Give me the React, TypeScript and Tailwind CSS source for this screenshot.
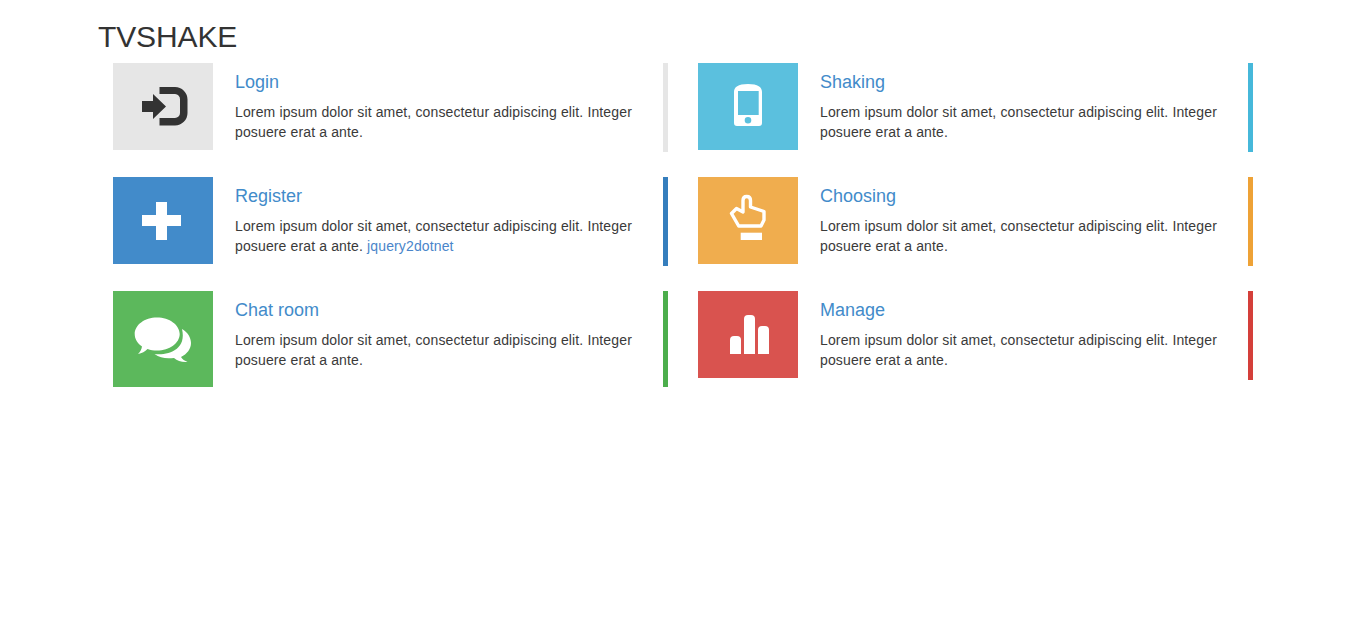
import React from "react";

const body = "Lorem ipsum dolor sit amet, consectetur adipiscing elit. Integer posuere erat a ante.";

function Item({
  title,
  bg,
  bar,
  h,
  box,
  link,
  children,
}: {
  title: string;
  bg: string;
  bar: string;
  h: string;
  box: string;
  link?: boolean;
  children: React.ReactNode;
}) {
  return (
    <div className={`flex items-start border-r-[5px] ${bar} ${h}`}>
      <div className={`w-[100px] shrink-0 ${bg} ${box}`}>
        {children}
      </div>
      <div className="ml-[22px] flex-1 pt-[9px]">
        <h4 className="text-[18px] leading-[20px] text-[#428bca] font-normal mb-[10px]">{title}</h4>
        <p className="text-[14px] leading-[20px] text-[#3a3a3a] tracking-[0.135px]">
          {body}
          {link && (
            <>
              {" "}
              <a className="text-[#4a85ca]">jquery2dotnet</a>
            </>
          )}
        </p>
      </div>
    </div>
  );
}

export default function App() {
  return (
    <div className="bg-white min-h-[626px] font-['Liberation_Sans',Arial,sans-serif] text-[#333333]">
      <h1 className="pl-[98px] pt-[20px] pb-[10px] text-[30px] leading-[33px] font-normal tracking-[-0.12px]">TVSHAKE</h1>
      <div className="ml-[113px] w-[1140px] grid grid-cols-2 gap-x-[30px] gap-y-[25px] items-start">
        <Item title="Login" bg="bg-[#e6e6e6]" bar="border-[#e6e6e6]" h="h-[89px]" box="h-[87px]">
          <svg viewBox="113 63 100 87" className="block w-[100px] h-[87px]" fill="#333333">
            <path d="M142 101H153V94L166 106.5L153 119V112H142Z" />
            <path d="M159.5 87H175A12.5 12.5 0 0 1 187.5 99.5V113A12.5 12.5 0 0 1 175 125.5H159.5V118H175A5 5 0 0 0 180 113V99.5A5 5 0 0 0 175 94H159.5Z" />
          </svg>
        </Item>
        <Item title="Shaking" bg="bg-[#5bc0de]" bar="border-[#46b8da]" h="h-[89px]" box="h-[87px]">
          <svg viewBox="698 63 100 87" className="block w-[100px] h-[87px]" fill="#ffffff">
            <path
              fillRule="evenodd"
              d="M734 92C734 87 738 84 748 84C758 84 762 87 762 92V123Q762 126 759 126H737Q734 126 734 123ZM738 91V115H758.7V91ZM748 117A3.3 3.3 0 1 0 748 123.6A3.3 3.3 0 1 0 748 117Z"
            />
          </svg>
        </Item>
        <Item title="Register" bg="bg-[#428bca]" bar="border-[#357ebd]" h="h-[89px]" box="h-[87px]" link>
          <svg viewBox="113 177 100 87" className="block w-[100px] h-[87px]" fill="#ffffff">
            <path d="M156 202H167V215H181V226H167V240H156V226H142V215H156Z" />
          </svg>
        </Item>
        <Item title="Choosing" bg="bg-[#f0ad4e]" bar="border-[#eea236]" h="h-[89px]" box="h-[87px]">
          <svg viewBox="698 177 100 87" className="block w-[100px] h-[87px]">
            <path
              d="M743 212V200.5Q743 196.5 746.700 196.500Q750.500 196.500 750.500 200.500V207L764 211.500V220L761 226H738.700L731.500 213.500L736.500 208.500Z"
              fill="none"
              stroke="#ffffff"
              strokeWidth="3.4"
              strokeLinejoin="round"
            />
            <rect x="740.7" y="232.7" width="21.3" height="7.3" fill="#ffffff" />
          </svg>
        </Item>
        <Item title="Chat room" bg="bg-[#5cb85c]" bar="border-[#4cae4c]" h="h-[96px]" box="h-[96px]">
          <svg viewBox="113 291 100 96" className="block w-[100px] h-[96px]" fill="#ffffff">
            <path d="M157 317.500C169.500 317.500 179.700 325 179.700 334C179.700 343 169.500 350.500 157 350.500C153.500 350.500 150.500 350 147.500 349C145 351.500 142 353.500 138 354C140 352 141.500 349.500 142 346.500C137.500 343.500 134.700 339 134.700 334C134.700 325 144.500 317.500 157 317.500Z" />
            <path d="M182 329C187.500 332 191 337.500 191 343C191 349 187 354 181 357C182 359 185 361 187.500 362C182 362.500 177.500 361 174 358C166 359 160 358 154.500 354C168 355.500 187 350 182 329Z" />
          </svg>
        </Item>
        <Item title="Manage" bg="bg-[#d9534f]" bar="border-[#d43f3a]" h="h-[89px]" box="h-[87px]">
          <svg viewBox="698 291 100 87" className="block w-[100px] h-[87px]" fill="#ffffff">
            <path d="M730 354V340A4 4 0 0 1 734 336H737A4 4 0 0 1 741 340V354Z" />
            <path d="M744 354V319A4 4 0 0 1 748 315H751A4 4 0 0 1 755 319V354Z" />
            <path d="M758 354V330A4 4 0 0 1 762 326H765A4 4 0 0 1 769 330V354Z" />
          </svg>
        </Item>
      </div>
    </div>
  );
}
